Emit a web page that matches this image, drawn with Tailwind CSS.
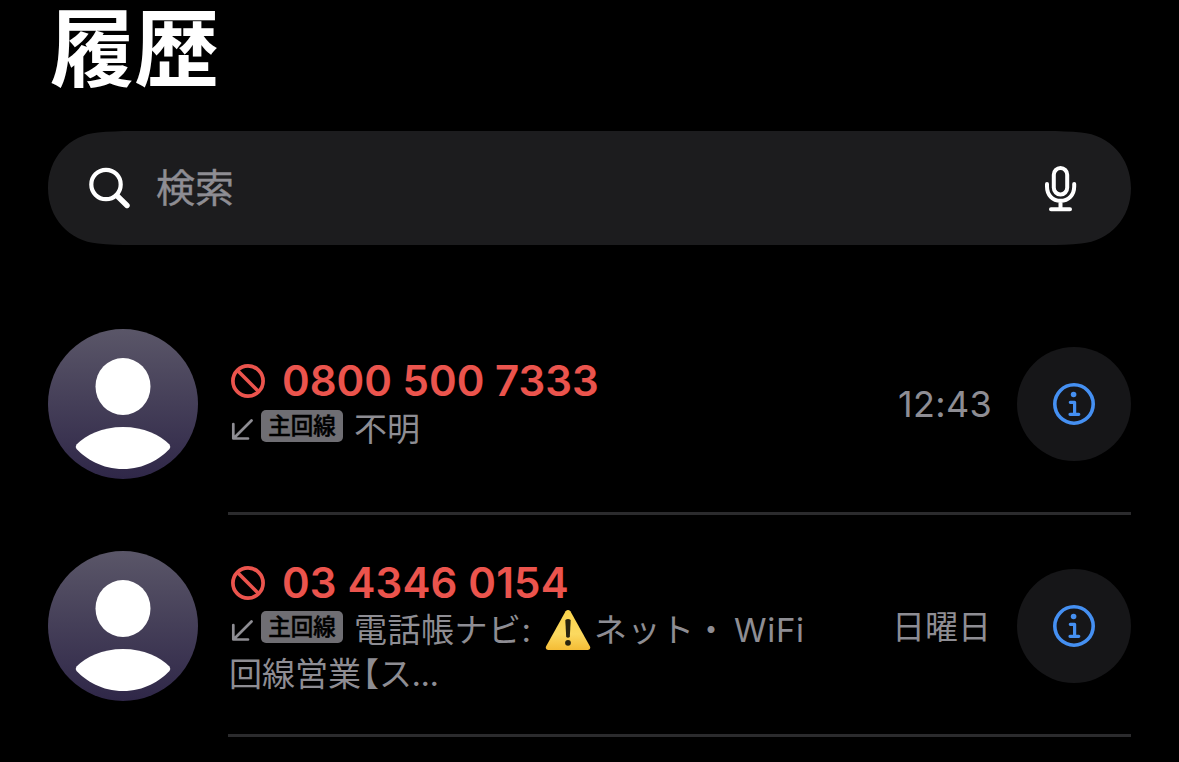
<!DOCTYPE html>
<html lang="ja">
<head>
<meta charset="utf-8">
<title>履歴</title>
<script src="https://cdn.jsdelivr.net/npm/@tailwindcss/browser@4"></script>
</head>
<body class="bg-black w-[1179px] h-[762px] overflow-hidden font-['Inter','Noto_Sans_CJK_JP',sans-serif] text-[#8e8d93]">
<svg width="0" height="0" class="absolute">
  <defs>
    <linearGradient id="avatarBg" x1="0" y1="0" x2="0" y2="1"><stop offset="0" stop-color="#5a5668"/><stop offset="1" stop-color="#2f2748"/></linearGradient>
    <linearGradient id="warnBg" x1="0" y1="0" x2="0" y2="1"><stop offset="0" stop-color="#fbd44c"/><stop offset="0.6" stop-color="#fbd960"/><stop offset="1" stop-color="#f4bc35"/></linearGradient>
    <symbol id="avatar" viewBox="0 0 150 150"><circle cx="75" cy="75" r="75" fill="url(#avatarBg)"/><ellipse cx="75" cy="57.5" rx="27.5" ry="28.5" fill="#fff"/><path d="M28.500 115.500C38 106 54 98 75 98S112 106 121.500 115.500Q123 118 121.500 120C112 130 96 140 75 140S38 130 28.500 120Q27 118 28.500 115.500Z" fill="#fff"/></symbol>
    <symbol id="blocked" viewBox="0 0 34 34"><g fill="none" stroke="#eb544d" stroke-width="3.700"><circle cx="17" cy="17" r="15.100"/><path d="M6.300 6.300L27.700 27.700"/></g></symbol>
    <symbol id="incoming" viewBox="0 0 22 22"><path d="M20.500 1.500L3 19M2.300 5V19.500H17" fill="none" stroke="#8e8d93" stroke-width="2.700" stroke-linecap="round" stroke-linejoin="round"/></symbol>
    <symbol id="info" viewBox="0 0 42 42"><circle cx="21" cy="21" r="19.200" fill="none" stroke="#4590f2" stroke-width="3.600"/><circle cx="20.600" cy="11.500" r="2.800" fill="#4590f2"/><path d="M17.300 19.300H21.600V31M17 31.300H25.800" fill="none" stroke="#4590f2" stroke-width="3.200" stroke-linecap="round" stroke-linejoin="round"/></symbol>
  </defs>
</svg>
<main class="px-12 flex flex-col">
  <h1 class="h-[131px] pl-[2px] text-white font-bold text-[84.500px] leading-[98px]">履歴</h1>
  <div class="h-[114px] bg-[#1c1c1e] [clip-path:path('M0_57C0_27_21_4_50_1.500C60_0.500_72_0_85_0H998C1011_0_1023_0.500_1033_1.500C1062_4_1083_27_1083_57C1083_87_1062_110_1033_112.500C1023_113.500_1011_114_998_114H85C72_114_60_113.500_50_112.500C21_110_0_87_0_57Z')] flex items-center shrink-0">
    <svg class="ml-[40px] w-[42px] h-[42px]" viewBox="0 0 42 42" fill="none" stroke="#fff" stroke-linecap="round"><circle cx="18" cy="17.500" r="14.700" stroke-width="4.200"/><path d="M28.800 28.500L39 38.500" stroke-width="5.400"/></svg>
    <span class="ml-[26px] text-[39px] leading-[56px] [-webkit-text-stroke:0.400px_#8e8d93]">検索</span>
    <svg class="ml-auto mr-[54px] mt-[1px] w-[33px] h-[46px]" viewBox="0 0 33 46" fill="none" stroke="#fff" stroke-width="4" stroke-linecap="round"><rect x="9.800" y="2" width="13.400" height="26.500" rx="6.700"/><path d="M3 18V20.500C3 29 8.500 34.800 16.500 34.800S30.200 29 30.200 20.500V18M16.500 35V43M7 43.200H26"/></svg>
  </div>

  <section class="mt-[48px]">
    <article class="h-[222px] flex">
      <svg class="mt-[36px] w-[150px] h-[150px] shrink-0"><use href="#avatar"/></svg>
      <div class="ml-[30px] flex-1 flex border-b-[3px] border-[#2b2b2d]">
        <div class="pt-[64px] w-[640px]">
          <div class="h-12 flex items-center text-[#eb544d] font-semibold text-[42px] leading-12 whitespace-nowrap">
            <svg class="ml-[3px] w-[34px] h-[34px] shrink-0"><use href="#blocked"/></svg><span class="ml-[17px]">0800 500 7333</span>
          </div>
          <div class="h-12 flex items-center text-[33px] leading-12 whitespace-nowrap">
            <svg class="ml-[3px] mt-[2px] w-[22px] h-[22px] shrink-0"><use href="#incoming"/></svg>
            <span class="ml-[8px] mb-[7px] w-[82px] h-[32px] rounded-[5px] bg-[#6f6e73] text-black font-medium text-[22.500px] leading-[31px] text-center [-webkit-text-stroke:0.500px_black]">主回線</span>
            <span class="ml-[11px]">不明</span>
          </div>
        </div>
        <div class="flex-1 flex justify-end pt-[54px]">
          <span class="mt-[33px] mr-[25px] text-[36px] leading-12 tracking-[0.300px]">12:43</span>
          <div class="w-[114px] h-[114px] rounded-full bg-[#161618] flex items-center justify-center shrink-0"><svg class="w-[42px] h-[42px]"><use href="#info"/></svg></div>
        </div>
      </div>
    </article>
    <article class="h-[222px] flex">
      <svg class="mt-[36px] w-[150px] h-[150px] shrink-0"><use href="#avatar"/></svg>
      <div class="ml-[30px] flex-1 flex border-b-[3px] border-[#2b2b2d]">
        <div class="pt-[43px] w-[640px]">
          <div class="h-12 flex items-center text-[#eb544d] font-semibold text-[42px] leading-12 whitespace-nowrap">
            <svg class="ml-[3px] mt-[1px] w-[34px] h-[34px] shrink-0"><use href="#blocked"/></svg><span class="ml-[17px] mt-[1px] tracking-[0.150px]">03 4346 0154</span>
          </div>
          <div class="h-12 flex items-center text-[33px] leading-12 whitespace-nowrap">
            <svg class="ml-[3px] mt-[2px] w-[22px] h-[22px] shrink-0"><use href="#incoming"/></svg>
            <span class="ml-[8px] mb-[7px] w-[82px] h-[32px] rounded-[5px] bg-[#6f6e73] text-black font-medium text-[22.500px] leading-[31px] text-center [-webkit-text-stroke:0.500px_black]">主回線</span>
            <span class="ml-[11px] w-[191px] tracking-[0.500px]">電話帳ナビ:</span>
            <svg class="w-[46px] h-[40px] shrink-0" viewBox="0 0 46 40"><path d="M20.600 1.200Q23 -1 25.400 1.200L45 36.500Q46 39.500 43 40H3Q0 39.500 1 36.500Z" fill="url(#warnBg)"/><path d="M20.300 10Q23 8 25.700 10L24.800 27Q23 28.500 21.200 27Z" fill="#28240f"/><circle cx="23" cy="32.800" r="2.900" fill="#28240f"/></svg>
            <span class="ml-[3px] w-[140px] tracking-[0.500px]">ネット・</span><span class="tracking-[0.700px]">WiFi</span>
          </div>
          <div class="h-10 pl-[1px] text-[33px] leading-10 whitespace-nowrap flex"><span class="w-[133px]">回線営業</span><span class="-ml-[16px] w-[33px]">【</span><span class="tracking-[-0.500px]">ス...</span></div>
        </div>
        <div class="flex-1 flex justify-end pt-[54px]">
          <span class="mt-[34px] mr-[26px] text-[33px] leading-12">日曜日</span>
          <div class="w-[114px] h-[114px] rounded-full bg-[#161618] flex items-center justify-center shrink-0"><svg class="w-[42px] h-[42px]"><use href="#info"/></svg></div>
        </div>
      </div>
    </article>
  </section>
</main>
</body>
</html>
